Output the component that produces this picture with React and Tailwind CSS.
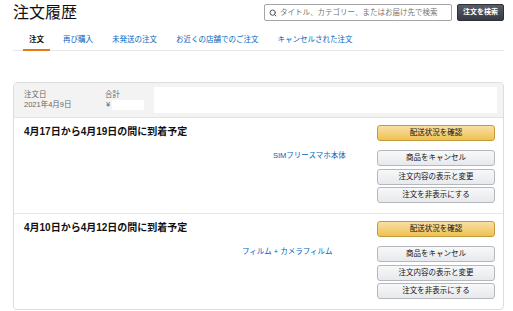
import { Search } from 'lucide-react'

const tabs = ['再び購入', '未発送の注文', 'お近くの店舗でのご注文', 'キャンセルされた注文']

function Shipment({ title, item, offset, last }) {
  return (
    <div className={`flex pl-[10px] pr-[8px] pt-[7px] pb-[10px] ${last ? '' : 'border-b border-[#e7e7e7]'}`}>
      <div className="flex-1">
        <div className="text-[10px] leading-[13px] font-bold text-[#111]">{title}</div>
        <div className={`mt-[13px] text-[7.5px] leading-[9px] text-[#0066c0] ${offset}`}>{item}</div>
      </div>
      <div className="w-[118px] flex flex-col">
        <button className="h-[16px] rounded-[3px] border border-[#c29b3f] bg-gradient-to-b from-[#f7dfa5] to-[#f0c14b] text-[7.5px] text-[#111]">
          配送状況を確認
        </button>
        <div className="mt-[9px] flex flex-col gap-[2.5px]">
          {['商品をキャンセル', '注文内容の表示と変更', '注文を非表示にする'].map((t) => (
            <button
              key={t}
              className="h-[16px] rounded-[3px] border border-[#b4b7bc] bg-gradient-to-b from-[#f7f8fa] to-[#e7e9ec] text-[7.5px] text-[#111]"
            >
              {t}
            </button>
          ))}
        </div>
      </div>
    </div>
  )
}

export default function App() {
  return (
    <div className="w-[513px] h-[311px] bg-white pl-[13px] pr-[9px] pt-[4px] font-['Liberation_Sans','Noto_Sans_CJK_JP',sans-serif] text-[#111]">
      {/* HEADER */}
      <div className="flex items-start justify-between h-[17px]">
        <h1 className="text-[16px] leading-[18px] font-normal text-[#111]">注文履歴</h1>
        <div className="flex gap-[5px]">
          <div className="w-[188px] h-[17px] flex items-center gap-[3px] px-[4px] border border-[#a6a6a6] rounded-[2px] bg-white">
            <Search className="w-[8px] h-[8px] text-[#555]" strokeWidth={3} />
            <span className="text-[7.5px] text-[#777]">タイトル、カテゴリー、またはお届け先で検索</span>
          </div>
          <button className="w-[47px] h-[17px] rounded-[2px] border border-[#2e3238] bg-gradient-to-b from-[#585e67] to-[#373c43] text-[7px] font-bold text-white">
            注文を検索
          </button>
        </div>
      </div>

      {/* TABS */}
      <div className="flex pl-[10px] gap-[7px] border-b border-[#e7e7e7]">
        <div className="px-[6px] pt-[14px] pb-[3px] border-b-2 border-[#e47911] -mb-px text-[7.5px] leading-[10px] font-bold text-[#111]">
          注文
        </div>
        {tabs.map((t) => (
          <div key={t} className="px-[6px] pt-[14px] pb-[5px] text-[7.5px] leading-[10px] text-[#0066c0]">
            {t}
          </div>
        ))}
      </div>

      {/* ORDER CARD */}
      <div className="mt-[31px] border border-[#dddddd] rounded-[4px] overflow-hidden">
        <div className="flex bg-[#f3f3f3] border-b border-[#e2e2e2] py-[4px] pr-[6px] h-[35px]">
          <div className="w-[91px] pl-[10px] pt-[3px] text-[7.5px] leading-[9.5px] text-[#666]">
            <div>注文日</div>
            <div>2021年4月9日</div>
          </div>
          <div className="w-[49px] pt-[3px] text-[7.5px] leading-[9.5px] text-[#666]">
            <div>合計</div>
            <div className="flex items-center">
              <span className="ml-[1px]">¥</span>
              <span className="ml-[2px] inline-block w-[32px] h-[10px] bg-white"></span>
            </div>
          </div>
          <div className="flex-1 bg-white"></div>
        </div>

        <Shipment title="4月17日から4月19日の間に到着予定" item="SIMフリースマホ本体" offset="ml-[249px]" />
        <Shipment title="4月10日から4月12日の間に到着予定" item="フィルム + カメラフィルム" offset="ml-[218px]" last />
      </div>
    </div>
  )
}
